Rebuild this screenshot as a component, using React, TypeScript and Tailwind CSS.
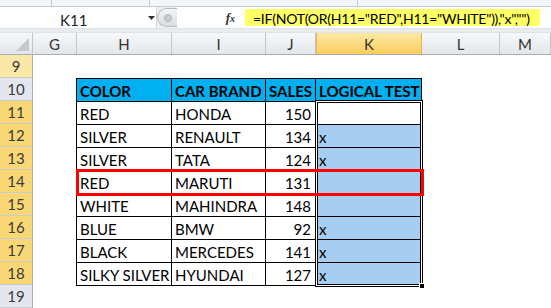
import React from 'react'

const rows = [
  { color: 'RED', brand: 'HONDA', sales: 150, test: '' },
  { color: 'SILVER', brand: 'RENAULT', sales: 134, test: 'x' },
  { color: 'SILVER', brand: 'TATA', sales: 124, test: 'x' },
  { color: 'RED', brand: 'MARUTI', sales: 131, test: '' },
  { color: 'WHITE', brand: 'MAHINDRA', sales: 148, test: '' },
  { color: 'BLUE', brand: 'BMW', sales: 92, test: 'x' },
  { color: 'BLACK', brand: 'MERCEDES', sales: 141, test: 'x' },
  { color: 'SILKY SILVER', brand: 'HYUNDAI', sales: 127, test: 'x' },
]

const columns = [
  { name: 'G', w: 'w-[44px]' },
  { name: 'H', w: 'w-[95px]' },
  { name: 'I', w: 'w-[94px]' },
  { name: 'J', w: 'w-[50px]' },
  { name: 'K', w: 'w-[106px]', active: true },
  { name: 'L', w: 'w-[78px]' },
  { name: 'M', w: 'flex-1' },
]

const rowHeaders = [
  { n: 9, bg: 'bg-[#fce8a6]' },
  { n: 10, bg: 'bg-[#e3e7ed]' },
  { n: 11, bg: 'bg-[#f9d775]' },
  { n: 12, bg: 'bg-[#f9d775]' },
  { n: 13, bg: 'bg-[#f9d775]' },
  { n: 14, bg: 'bg-[#f9d775]' },
  { n: 15, bg: 'bg-[#f9d775]' },
  { n: 16, bg: 'bg-[#f9d775]' },
  { n: 17, bg: 'bg-[#f9d775]' },
  { n: 18, bg: 'bg-[#f9d775]' },
  { n: 19, bg: 'bg-[#e3e7ed]' },
]

const cell = 'h-[23px] border-r border-b border-black px-[3px] flex items-center pt-[3px] whitespace-nowrap'

export default function App() {
  return (
    <div className="w-[551px] h-[308px] overflow-hidden bg-white font-['Lato','Liberation_Sans',sans-serif] text-[15px] text-black">
      {/* ribbon remnant */}
      <div className="h-[7px] flex bg-[#f4f5f7] border-b border-[#c8ccd2]">
        <div className="w-[52px] border-r border-[#c8ccd2]" />
        <div className="w-[98px] border-r border-[#c8ccd2]" />
        <div className="w-[208px] border-r border-[#c8ccd2]" />
      </div>

      {/* formula bar */}
      <div className="h-[21px] flex bg-white">
        <div className="w-[157px] relative flex items-center border-r border-[#d5d8dc]">
          <span className="absolute left-[60px] top-[2px] text-[15px] text-[#222]">K11</span>
          <svg className="absolute left-[148px] top-[9px]" width="7" height="4" viewBox="0 0 7 4">
            <path d="M0 0h7L3.5 4z" fill="#333" />
          </svg>
        </div>
        <div className="w-[20px] flex items-center bg-[#eef0f3]">
          <div className="w-[20px] h-[19px] rounded-l-full bg-gradient-to-b from-[#f4f5f7] to-[#d9dce0] border border-[#b9bdc3] border-r-0 flex items-center justify-center">
            <div className="w-[8px] h-[8px] rounded-full bg-[#c9ccd1] border border-[#b0b4ba]" />
          </div>
        </div>
        <div className="w-[68px] flex items-center justify-end pr-[10px]">
          <span className="font-['Liberation_Serif',serif] italic font-bold text-[13px] text-[#333]">
            f<span className="text-[10px]">x</span>
          </span>
        </div>
        <div className="flex-1 flex items-center">
          <div className="w-[295px] h-[17px] bg-[#ffff66] flex items-center pl-[8px] text-[14px] tracking-[-0.25px] whitespace-nowrap pt-[1px]">
            =IF(NOT(OR(H11="RED",H11="WHITE")),"x","")
          </div>
        </div>
      </div>

      {/* spacer under formula bar */}
      <div className="h-[5px] bg-[#e9ecef] border-t border-[#c8ccd2] border-b border-[#dfe2e6]" />

      {/* column headers */}
      <div className="h-[22px] flex bg-gradient-to-b from-[#f7f8fa] to-[#e3e6ea] border-b border-[#a9aeb5] text-[#333]">
        <div className="w-[33px] relative border-r border-[#c3c7cc]">
          <svg className="absolute right-[3px] bottom-[3px]" width="13" height="13" viewBox="0 0 13 13">
            <path d="M13 0V13H0z" fill="#c5c9ce" />
          </svg>
        </div>
        {columns.map((c) => (
          <div
            key={c.name}
            className={`${c.w} flex items-center justify-center border-r pt-[1px] ${
              c.active
                ? 'bg-gradient-to-b from-[#fde9a4] to-[#f8cd5a] border-[#e9b24a] border-l border-l-[#e9b24a]'
                : 'border-[#c3c7cc]'
            }`}
          >
            {c.name}
          </div>
        ))}
      </div>

      {/* sheet body */}
      <div className="flex">
        <div className="w-[33px] flex flex-col border-r border-[#a9aeb5]">
          {rowHeaders.map((r) => (
            <div
              key={r.n}
              className={`h-[23px] ${r.bg} border-b border-[#c9cdd2] flex items-center justify-center text-[#3a3a3a] pt-[1px]`}
            >
              {r.n}
            </div>
          ))}
        </div>

        <div className="relative flex-1 pl-[43px] pt-[23px]">
          <div className="w-[346px] border-l border-t border-black grid grid-cols-[95px_94px_50px_106px]">
            <div className={`${cell} bg-[#00b0f0] font-bold`}>COLOR</div>
            <div className={`${cell} bg-[#00b0f0] font-bold`}>CAR BRAND</div>
            <div className={`${cell} bg-[#00b0f0] font-bold`}>SALES</div>
            <div className={`${cell} bg-[#00b0f0] font-bold`}>LOGICAL TEST</div>
            {rows.map((r, i) => (
              <React.Fragment key={i}>
                <div className={cell}>{r.color}</div>
                <div className={cell}>{r.brand}</div>
                <div className={`${cell} justify-end pr-[4px]`}>{r.sales}</div>
                <div className={`${cell} ${i === 0 ? 'bg-white' : 'bg-[#a7cef0]'}`}>{r.test}</div>
              </React.Fragment>
            ))}
          </div>

          {/* selection outline K11:K18 */}
          <div className="absolute left-[282px] top-[45px] w-[108px] h-[187px] border border-black shadow-[inset_0_0_0_1px_white,inset_0_0_0_2px_black]" />
          <div className="absolute left-[386px] top-[228px] w-[6px] h-[6px] bg-black border border-white" />

          {/* highlighted row */}
          <div className="absolute left-[43px] top-[114px] w-[348px] h-[27px] border-[3px] border-[#ff0000]" />
        </div>
      </div>
    </div>
  )
}
